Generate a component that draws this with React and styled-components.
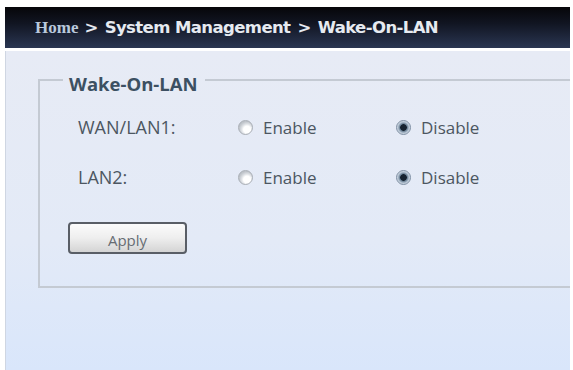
import React, { useState } from 'react';
import styled, { createGlobalStyle } from 'styled-components';

const GlobalStyle = createGlobalStyle`
  html, body {
    margin: 0;
    padding: 0;
    background: #ffffff;
    width: 573px;
    height: 370px;
    overflow: hidden;
  }
`;

const Page = styled.div`
  display: flex;
  flex-direction: column;
  padding: 7px 3px 0 5px;
  height: 363px;
`;

const Breadcrumb = styled.div`
  height: 41px;
  display: flex;
  align-items: center;
  padding-left: 30px;
  background: linear-gradient(#060609 0%, #111522 40%, #2a3652 100%);
  font-family: 'DejaVu Sans', Verdana, sans-serif;
  font-weight: bold;
  font-size: 16.5px;
  color: #e6eaf0;
  letter-spacing: -0.6px;
`;

const HomeLink = styled.span`
  font-family: 'Liberation Serif', 'DejaVu Serif', serif;
  font-weight: bold;
  color: #b9c9dc;
  font-size: 17px;
  letter-spacing: 0;
  margin-right: 6px;
`;

const Sep = styled.span`
  margin: 0 7px;
`;

const Content = styled.div`
  flex: 1;
  margin-top: 3px;
  padding: 12px 0 0 32px;
  background: linear-gradient(#e7ebf5 0%, #e3eaf7 60%, #d9e6fb 100%);
  border-left: 1px solid #cfd6e2;
`;

const Fieldset = styled.fieldset`
  margin: 0;
  padding: 6px 0 32px 38px;
  border: none;
  border-top: 2px solid #c4cad3;
  border-left: 2px solid #c4cad3;
  border-bottom: 2px solid #c4cad3;
  min-width: 0;
`;

const Legend = styled.legend`
  padding: 8px 7px 0 6px;
  margin-left: -15px;
  font-family: 'Open Sans', sans-serif;
  font-weight: bold;
  font-size: 18.5px;
  color: #3c5062;
`;

const Row = styled.div`
  display: grid;
  grid-template-columns: 160px 158px auto;
  align-items: center;
  height: 50px;
  font-family: 'Open Sans', sans-serif;
  font-size: 17px;
  color: #4c5661;
`;

const Label = styled.span`
  font-size: 18px;
`;

const Option = styled.label`
  display: flex;
  align-items: center;
  gap: 10px;
  cursor: pointer;
`;

const RadioDot = styled.span`
  width: 13px;
  height: 13px;
  border-radius: 50%;
  border: 1px solid ${(p) => (p.$on ? '#7d8ea2' : '#a9aeb5')};
  background: ${(p) =>
    p.$on
      ? 'radial-gradient(circle, #16222f 0 3px, #5d7489 3.5px, #b5c3d2 5.5px, #dde4ec 7px)'
      : 'radial-gradient(circle at 62% 66%, #ffffff 0 3.5px, #dfe2e6 5.5px, #bfc4ca 8px)'};
`;

const ButtonRow = styled.div`
  padding-top: 20px;
  margin-left: -10px;
`;

const ApplyButton = styled.button`
  width: 119px;
  height: 32px;
  border: 2px solid #595e66;
  border-radius: 4px;
  background: linear-gradient(#fbfbfb 0%, #eeeeee 50%, #d4d4d4 100%);
  font-family: 'Open Sans', sans-serif;
  font-size: 15px;
  color: #666c73;
  padding-top: 4px;
`;

const rows = [
  { id: 'wan', label: 'WAN/LAN1:' },
  { id: 'lan2', label: 'LAN2:' },
];

export default function App() {
  const [values, setValues] = useState({ wan: 'disable', lan2: 'disable' });

  return (
    <>
      <GlobalStyle />
      <Page>
        <Breadcrumb>
          <HomeLink>Home</HomeLink>
          &gt;<Sep>System Management</Sep>&gt;<Sep>Wake-On-LAN</Sep>
        </Breadcrumb>
        <Content>
          <Fieldset>
            <Legend>Wake-On-LAN</Legend>
            {rows.map((r) => (
              <Row key={r.id}>
                <Label>{r.label}</Label>
                <Option onClick={() => setValues({ ...values, [r.id]: 'enable' })}>
                  <RadioDot $on={values[r.id] === 'enable'} />
                  Enable
                </Option>
                <Option onClick={() => setValues({ ...values, [r.id]: 'disable' })}>
                  <RadioDot $on={values[r.id] === 'disable'} />
                  Disable
                </Option>
              </Row>
            ))}
            <ButtonRow>
              <ApplyButton>Apply</ApplyButton>
            </ButtonRow>
          </Fieldset>
        </Content>
      </Page>
    </>
  );
}
